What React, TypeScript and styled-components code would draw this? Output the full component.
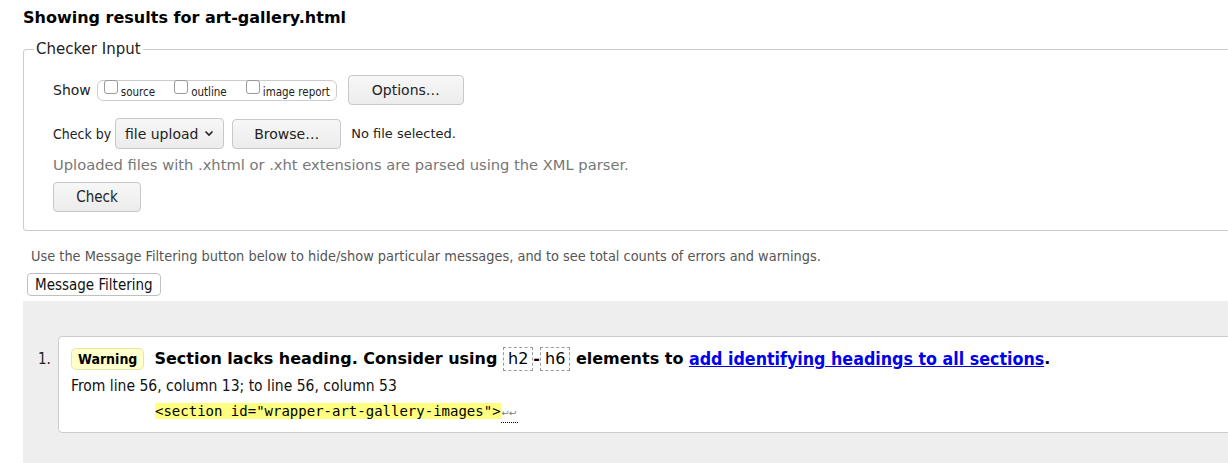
import React from 'react';
import styled, { createGlobalStyle } from 'styled-components';

const GlobalStyle = createGlobalStyle`
  html, body {
    margin: 0;
    padding: 0;
    overflow: hidden;
    background: #ffffff;
  }
  body {
    font-family: "DejaVu Sans Condensed", "DejaVu Sans", sans-serif;
    font-size: 14px;
    color: #000;
  }
`;

const Page = styled.div`
  width: 1260px;
  padding: 0 0 0 23px;
  height: 463px;
`;

const Title = styled.h2`
  margin: 0;
  padding-top: 6px;
  font-family: "DejaVu Sans", sans-serif;
  font-size: 16px;
  font-weight: bold;
  line-height: 24px;
`;

const Fieldset = styled.fieldset`
  margin: 10px 0 0 0;
  padding: 17px 0 18px 10px;
  border: 1px solid #cccccc;
  border-radius: 3px;
  min-width: 0;
`;

const Legend = styled.legend`
  padding: 0 2px;
  font-family: "DejaVu Sans", sans-serif;
  font-size: 15px;
  color: #222;
`;

const FieldBody = styled.div`
  padding-left: 19px;
`;

const Row = styled.div<{ $mt?: number }>`
  display: flex;
  align-items: center;
  margin-top: ${(p) => p.$mt ?? 0}px;
  white-space: nowrap;
`;

const Label = styled.span<{ $wide?: boolean }>`
  margin-right: ${(p) => (p.$wide ? 6 : 4)}px;
  font-family: ${(p) =>
    p.$wide ? '"DejaVu Sans", sans-serif' : '"DejaVu Sans Condensed", "DejaVu Sans", sans-serif'};
  font-size: 14px;
  color: #222;
`;

const CheckGroup = styled.span`
  display: inline-flex;
  align-items: flex-start;
  height: 19px;
  padding: 0 6px;
  border: 1px solid #cccccc;
  border-radius: 6px;
  margin-right: 11px;
`;

const CheckOption = styled.label`
  display: inline-flex;
  align-items: flex-start;
  margin-right: 19px;
  font-size: 11.5px;
  color: #222;

  &:last-child {
    margin-right: 0;
  }

  span {
    padding-top: 4px;
    margin-left: 3px;
  }
`;

const Box = styled.input`
  appearance: none;
  margin: -1px 0 0 0;
  width: 14px;
  height: 14px;
  border: 1px solid #999999;
  border-radius: 3px;
  background: #fff;
`;

const Button = styled.button<{ $w: number; $h?: number; $narrow?: boolean }>`
  width: ${(p) => p.$w}px;
  height: ${(p) => p.$h ?? 30}px;
  padding: 0;
  font-family: ${(p) =>
    p.$narrow ? '"DejaVu Sans Condensed", "DejaVu Sans", sans-serif' : '"DejaVu Sans", sans-serif'};
  font-size: ${(p) => (p.$narrow ? 15 : 14)}px;
  color: #222;
  background: linear-gradient(#f7f7f7, #ececec);
  border: 1px solid #c8c8c8;
  border-radius: 4px;
`;

const Select = styled.span`
  display: inline-flex;
  align-items: center;
  justify-content: center;
  gap: 6px;
  box-sizing: border-box;
  width: 109px;
  height: 31px;
  margin-right: 8px;
  font-family: "DejaVu Sans", sans-serif;
  font-size: 14px;
  color: #222;
  background: linear-gradient(#f7f7f7, #ececec);
  border: 1px solid #c8c8c8;
  border-radius: 4px;
`;

const FileName = styled.span`
  margin-left: 10px;
  font-family: "DejaVu Sans", sans-serif;
  font-size: 13px;
  color: #222;
`;

const Hint = styled.p`
  margin: 6px 0 0 0;
  font-family: "DejaVu Sans", sans-serif;
  font-size: 14.7px;
  line-height: 20px;
  color: #777777;
`;

const Note = styled.p`
  margin: 15px 0 0 8px;
  font-size: 14.4px;
  line-height: 20px;
  color: #555555;
`;

const FilterButton = styled.button`
  margin: 7px 0 0 4px;
  height: 23px;
  padding: 0 7px;
  font-family: "DejaVu Sans Condensed", "DejaVu Sans", sans-serif;
  font-size: 15px;
  color: #111;
  background: #ffffff;
  border: 1px solid #c0c0c0;
  border-radius: 4px;
`;

const Results = styled.div`
  margin-top: 5px;
  background: #eeeeee;
  padding: 35px 0 40px 15px;
  display: flex;
  align-items: flex-start;
`;

const Num = styled.span`
  width: 20px;
  padding-top: 14px;
  font-size: 15px;
  color: #222;
`;

const Card = styled.div`
  flex: 1;
  background: #ffffff;
  border: 1px solid #cccccc;
  border-radius: 4px 0 0 4px;
  padding: 10px 12px 9px 12px;
`;

const Heading = styled.p`
  margin: 0;
  display: flex;
  align-items: center;
  white-space: pre;
  font-family: "DejaVu Sans", sans-serif;
  font-size: 16px;
  font-weight: bold;
  line-height: 24px;
`;

const Badge = styled.span`
  display: inline-flex;
  align-items: center;
  height: 20px;
  padding: 0 6px;
  margin-right: 10px;
  font-family: "DejaVu Sans Condensed", "DejaVu Sans", sans-serif;
  font-size: 14px;
  font-weight: bold;
  background: #ffffcc;
  border: 1px solid #e6e6a6;
  border-radius: 5px;
`;

const Tag = styled.code`
  display: inline-block;
  box-sizing: border-box;
  height: 24px;
  padding: 0 4px;
  font-family: "DejaVu Sans", sans-serif;
  font-size: 16px;
  font-weight: normal;
  line-height: 22px;
  border: 1px dashed #999999;
`;

const Link = styled.a`
  font-family: "DejaVu Sans Condensed", "DejaVu Sans", sans-serif;
  font-size: 17.7px;
  color: #0000ee;
  text-decoration: underline;
`;

const Location = styled.p`
  margin: 5px 0 0 0;
  font-size: 15.5px;
  line-height: 20px;
  color: #111;
`;

const Extract = styled.p`
  margin: 6px 0 0 84px;
  font-family: "DejaVu Sans Mono", monospace;
  font-size: 14px;
  line-height: 18px;
`;

const Mark = styled.b`
  font-weight: normal;
  background: #ffff80;
`;

const Returns = styled.span`
  display: inline-block;
  padding: 0 1px 4px 1px;
  font-family: "DejaVu Sans", sans-serif;
  font-size: 9px;
  line-height: 10px;
  color: #777;
  border-bottom: 1px dotted #000;
`;

const App: React.FC = () => {
  return (
    <Page>
      <GlobalStyle />
      <Title>Showing results for art-gallery.html</Title>
      <Fieldset>
        <Legend>Checker Input</Legend>
        <FieldBody>
          <Row>
            <Label $wide>Show</Label>
            <CheckGroup>
              <CheckOption>
                <Box type="checkbox" />
                <span>source</span>
              </CheckOption>
              <CheckOption>
                <Box type="checkbox" />
                <span>outline</span>
              </CheckOption>
              <CheckOption>
                <Box type="checkbox" />
                <span>image report</span>
              </CheckOption>
            </CheckGroup>
            <Button $w={116}>Options…</Button>
          </Row>
          <Row $mt={13}>
            <Label>Check by</Label>
            <Select>
              file upload
              <svg width="10" height="7" viewBox="0 0 10 7">
                <path d="M1.5 1.5 L5 5 L8.5 1.5" fill="none" stroke="#222" strokeWidth="1.6" />
              </svg>
            </Select>
            <Button $w={109}>Browse…</Button>
            <FileName>No file selected.</FileName>
          </Row>
          <Hint>Uploaded files with .xhtml or .xht extensions are parsed using the XML parser.</Hint>
          <Row $mt={7}>
            <Button $w={88} $narrow>Check</Button>
          </Row>
        </FieldBody>
      </Fieldset>
      <Note>
        Use the Message Filtering button below to hide/show particular messages, and to see total counts of errors and warnings.
      </Note>
      <FilterButton>Message Filtering</FilterButton>
      <Results>
        <Num>1.</Num>
        <Card>
          <Heading>
            <Badge>Warning</Badge>
            {'Section lacks heading. Consider using '}
            <Tag>h2</Tag>-<Tag>h6</Tag>
            {' elements to '}
            <Link href="#">add identifying headings to all sections</Link>.
          </Heading>
          <Location>From line 56, column 13; to line 56, column 53</Location>
          <Extract>
            <Mark>{'<section id="wrapper-art-gallery-images">'}</Mark>
            <Returns>↩↩</Returns>
          </Extract>
        </Card>
      </Results>
    </Page>
  );
};

export default App;
